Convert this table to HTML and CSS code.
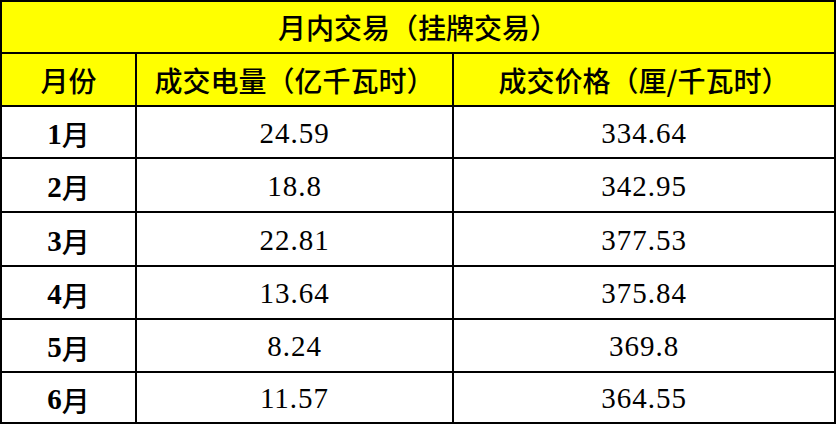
FILE: index.html
```html
<!DOCTYPE html>
<html lang="zh-CN">
<head>
<meta charset="utf-8">
<title>月内交易（挂牌交易）</title>
<link rel="stylesheet" href="styles.css">
</head>
<body>
<div class="sheet">
  <div class="cell title">月内交易（挂牌交易）</div>
  <div class="cell head">月份</div>
  <div class="cell head">成交电量（亿千瓦时）</div>
  <div class="cell head">成交价格（厘/千瓦时）</div>

  <div class="cell month"><span class="digit">1</span>月</div>
  <div class="cell num">24.59</div>
  <div class="cell num">334.64</div>

  <div class="cell month"><span class="digit">2</span>月</div>
  <div class="cell num">18.8</div>
  <div class="cell num">342.95</div>

  <div class="cell month"><span class="digit">3</span>月</div>
  <div class="cell num">22.81</div>
  <div class="cell num">377.53</div>

  <div class="cell month"><span class="digit">4</span>月</div>
  <div class="cell num">13.64</div>
  <div class="cell num">375.84</div>

  <div class="cell month"><span class="digit">5</span>月</div>
  <div class="cell num">8.24</div>
  <div class="cell num">369.8</div>

  <div class="cell month"><span class="digit">6</span>月</div>
  <div class="cell num">11.57</div>
  <div class="cell num">364.55</div>
</div>
</body>
</html>
```
FILE: styles.css
```css
html, body {
  margin: 0;
  padding: 0;
  background: #ffffff;
}

.sheet {
  width: 836px;
  height: 424px;
  box-sizing: border-box;
  padding: 2px;
  gap: 2px;
  background: #000000;
  display: grid;
  grid-template-columns: 133px 315px 380px;
  grid-template-rows: 50px 51px 50px 52px 52px 51px 51px 49px;
}

.cell {
  display: flex;
  align-items: center;
  justify-content: center;
  background: #ffffff;
  color: #000000;
  white-space: nowrap;
}

.title,
.head {
  background: #ffff00;
  font-family: "Noto Sans CJK SC", sans-serif;
  font-size: 28px;
  font-weight: 500;
}

.title {
  grid-column: 1 / span 3;
}

.month {
  font-family: "Liberation Serif", "Noto Sans CJK SC", serif;
  font-size: 28px;
  font-weight: 500;
  padding-top: 4px;
}

.digit {
  font-weight: 700;
  font-size: 29px;
}

.num {
  font-family: "Liberation Serif", serif;
  font-size: 29px;
  letter-spacing: 1px;
  padding-top: 2px;
}
```
